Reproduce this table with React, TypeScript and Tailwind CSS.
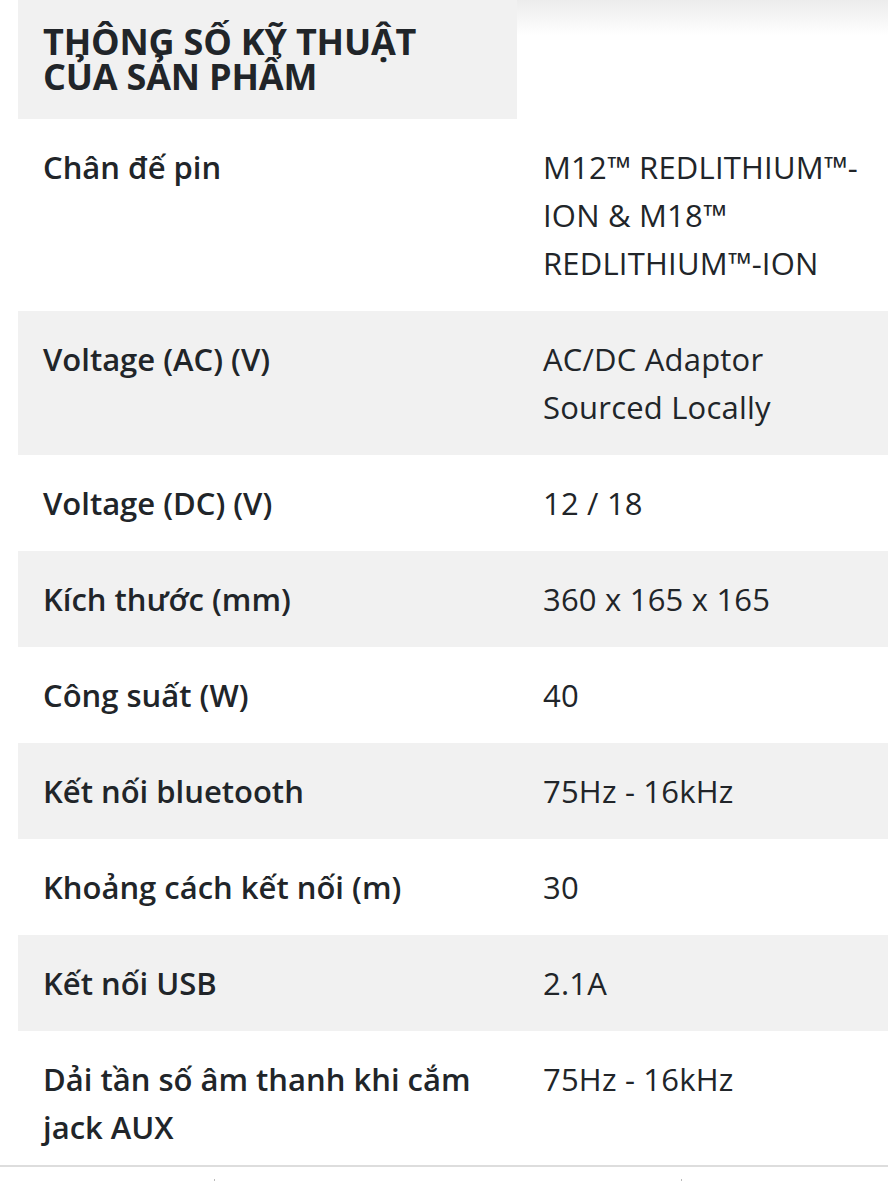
const specs: { label: string; value: string }[] = [
  { label: "Chân đế pin", value: "M12™ REDLITHIUM™-ION & M18™ REDLITHIUM™-ION" },
  { label: "Voltage (AC) (V)", value: "AC/DC Adaptor Sourced Locally" },
  { label: "Voltage (DC) (V)", value: "12 / 18" },
  { label: "Kích thước (mm)", value: "360 x 165 x 165" },
  { label: "Công suất (W)", value: "40" },
  { label: "Kết nối bluetooth", value: "75Hz - 16kHz" },
  { label: "Khoảng cách kết nối (m)", value: "30" },
  { label: "Kết nối USB", value: "2.1A" },
  { label: "Dải tần số âm thanh khi cắm jack AUX", value: "75Hz - 16kHz" },
]

export default function App() {
  return (
    <main className="w-[888px] h-[1182px] overflow-hidden bg-white text-[#212529] font-['Open_Sans',sans-serif]">
      <div className="pl-[18px]">
        <div className="grid grid-cols-[499px_1fr]">
          <div className="bg-[#f1f1f1] pl-[25px] pr-4 pt-6 pb-[25px]">
            <h2 className="text-[36px] leading-[35px] font-bold tracking-[-0.2px] uppercase">
              Thông số kỹ thuật
              <br />
              của sản phẩm
            </h2>
          </div>
          <div className="bg-gradient-to-b from-[#ececec] via-white via-30% to-white" />
        </div>

        {specs.map((s, i) => (
          <div
            key={s.label}
            className={
              "grid grid-cols-[499px_1fr] text-[31px] leading-[48px] " +
              (i % 2 === 1 ? "bg-[#f1f1f1]" : "bg-white")
            }
          >
            <div
              className={
                "pl-[25px] pr-[25px] pt-6 font-semibold " +
                (i === specs.length - 1 ? "pb-[14px]" : "pb-6")
              }
            >
              {s.label}
            </div>
            <div className="pl-[26px] pr-[12px] pt-6 pb-6 tracking-[0.2px]">{s.value}</div>
          </div>
        ))}
      </div>

      <div className="h-[2px] bg-[#dddddd]" />
      <div className="relative h-4">
        <span className="absolute left-[214px] top-[12px] w-px h-[2px] bg-[#bbbbbb]" />
        <span className="absolute left-[681px] top-[12px] w-px h-[2px] bg-[#bbbbbb]" />
      </div>
    </main>
  )
}
